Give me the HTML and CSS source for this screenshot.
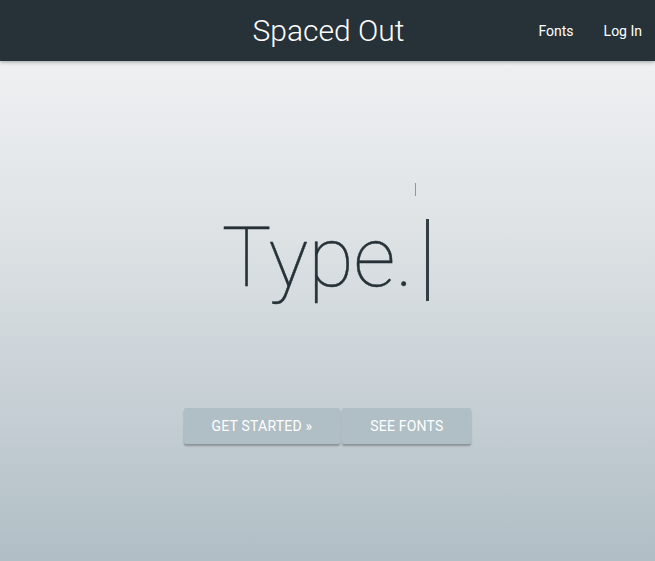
FILE: index.html
```html
<!DOCTYPE html>
<html>
<head>
<meta charset="utf-8">
<title>Spaced Out</title>
<link rel="stylesheet" href="styles.css">
</head>
<body>
<header class="topbar">
  <div class="brand">Spaced Out</div>
  <nav class="nav">
    <a href="#">Fonts</a>
    <a href="#">Log In</a>
  </nav>
</header>
<main class="hero">
  <div class="typer">
    <span class="mini-caret"></span>
    <h1 class="headline">Type.<span class="caret"></span></h1>
  </div>
  <div class="actions">
    <a class="btn" href="#">Get Started &raquo;</a>
    <a class="btn" href="#">See Fonts</a>
  </div>
</main>
</body>
</html>
```
FILE: styles.css
```css
* { box-sizing: border-box; }
html, body { margin: 0; height: 100%; }
body {
  font-family: "Roboto", "Open Sans", sans-serif;
  background: linear-gradient(to bottom, #f4f5f6 0%, #dfe3e6 40%, #b0bec5 100%);
  min-height: 561px;
  display: flex;
  flex-direction: column;
}
.topbar {
  height: 61px;
  background: #263238;
  box-shadow: 0 1px 4px rgba(0,0,0,0.35);
  position: relative;
  display: flex;
  align-items: center;
  justify-content: center;
}
.brand {
  color: #fff;
  font-size: 30px;
  font-weight: 300;
  margin-left: 2px;
}
.nav {
  position: absolute;
  right: 13px;
  top: 0;
  height: 61px;
  display: flex;
  align-items: center;
  gap: 30px;
}
.nav a {
  color: #fff;
  text-decoration: none;
  font-size: 14px;
}
.hero {
  flex: 1;
  display: flex;
  flex-direction: column;
  align-items: center;
}
.typer {
  position: relative;
  margin-top: 156px;
  margin-right: 4px;
}
.mini-caret {
  position: absolute;
  right: 13px;
  top: -34px;
  width: 1px;
  height: 13px;
  background: #b8973a;
}
.headline {
  margin: 0;
  font-size: 83px;
  font-weight: 100;
  -webkit-text-stroke: 0.5px #263238;
  color: #263238;
  line-height: 82px;
  display: flex;
  align-items: flex-start;
}
.caret {
  display: block;
  width: 3px;
  height: 82px;
  margin-top: 2px;
  background: #323f45;
  margin-left: 13px;
}
.actions {
  margin-top: 107px;
  display: flex;
  gap: 2px;
}
.btn {
  display: block;
  height: 36px;
  line-height: 36px;
  padding: 0 28px;
  background: #b0bec5;
  color: #fff;
  text-decoration: none;
  text-transform: uppercase;
  font-size: 14px;
  letter-spacing: 0.2px;
  border-radius: 2px;
  box-shadow: 0 2px 2px rgba(0,0,0,0.28);
}
```
